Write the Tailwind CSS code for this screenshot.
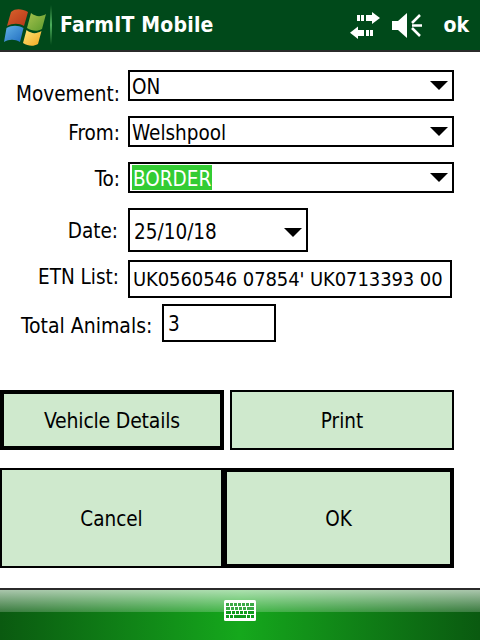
<!DOCTYPE html>
<html lang="en">
<head>
  <meta charset="UTF-8" />
  <title>FarmIT Mobile</title>
  <script src="https://cdn.jsdelivr.net/npm/@tailwindcss/browser@4"></script>
</head>
<body class="w-[480px] h-[640px] flex flex-col overflow-hidden bg-white text-black text-[20.5px] leading-none font-['DejaVu_Sans_Condensed','DejaVu_Sans',sans-serif]">

  <!-- Title bar -->
  <header class="h-[52px] shrink-0 flex items-center bg-[#00491a] border-b-2 border-[#2b2b2b] text-white">
    <svg class="ml-[4px] w-[43px] h-[44px] shrink-0" viewBox="0 0 43 44">
      <defs>
        <linearGradient id="red" x1="0" y1="0" x2="1" y2="1"><stop offset="0" stop-color="#d9622c"/><stop offset="1" stop-color="#b5371a"/></linearGradient>
        <linearGradient id="grn" x1="0" y1="0" x2="1" y2="1"><stop offset="0" stop-color="#a6c24e"/><stop offset="1" stop-color="#5c9a2c"/></linearGradient>
        <linearGradient id="blu" x1="0" y1="0" x2="1" y2="1"><stop offset="0" stop-color="#62b2e6"/><stop offset="1" stop-color="#1f6cc0"/></linearGradient>
        <linearGradient id="yel" x1="0" y1="0" x2="1" y2="1"><stop offset="0" stop-color="#fde57a"/><stop offset="1" stop-color="#f4a81f"/></linearGradient>
      </defs>
      <path d="M7 9 C12 5 18 6 24 9 L20 23 C15 20 9 20 3 23 Z" fill="url(#red)"/>
      <path d="M27 10 C32 14 37 14 42 11 L38 26 C33 29 28 28 23 25 Z" fill="url(#grn)"/>
      <path d="M2.500 25 C8 22 14 22 19.500 25 L16 39 C11 36 5 36 0 39 Z" fill="url(#blu)"/>
      <path d="M22.500 27 C28 31 32 31 37.500 28 L34 41 C29 44 24 43 19 40 Z" fill="url(#yel)"/>
    </svg>
    <div class="ml-[3px] w-[2px] h-[40px] bg-gradient-to-b from-[#00491a] via-[#4caf5c] to-[#00491a]"></div>
    <h1 class="ml-[8px] font-bold text-[21px] tracking-[0.2px]">FarmIT Mobile</h1>
    <div class="ml-auto flex items-center">
      <svg class="w-[30px] h-[27px]" viewBox="0 0 30 27" fill="#fff">
        <path d="M7 3h3v6H7zM11 3h3v6h-3zM16 3h6V0l8 6-8 6V9h-6z"/>
        <path d="M23 18h-3v6h3zM19 18h-3v6h3zM14 18H8v-3.500L0 20.750 8 27v-3h6z"/>
      </svg>
      <svg class="ml-[12px] w-[31px] h-[25px]" viewBox="0 0 31 25">
        <path d="M0 8h6L15 0v25L6 17H0z" fill="#fff"/>
        <path d="M20 12.500h10M20 10L28 2M20 15l8 8" stroke="#fff" stroke-width="2.500" fill="none"/>
      </svg>
      <span class="ml-[20px] mr-[11px] font-bold text-[21px]">ok</span>
    </div>
  </header>

  <!-- Form -->
  <main class="flex-1 flex flex-col">
    <div class="mt-[18px] flex items-center">
      <label class="w-[120px] text-right self-end -mb-[3px]">Movement:</label>
      <div class="ml-[8px] w-[326px] h-[31px] border-2 border-black flex items-center justify-between pl-[2px] pr-[4px]">
        <span class="pt-[4px]">ON</span>
        <span class="border-x-[9px] border-x-transparent border-t-[9px] border-t-black"></span>
      </div>
    </div>
    <div class="mt-[15px] flex items-center">
      <label class="w-[120px] text-right pt-[4px]">From:</label>
      <div class="ml-[8px] w-[326px] h-[31px] border-2 border-black flex items-center justify-between pl-[2px] pr-[4px]">
        <span class="pt-[4px]">Welshpool</span>
        <span class="border-x-[9px] border-x-transparent border-t-[9px] border-t-black"></span>
      </div>
    </div>
    <div class="mt-[15px] flex items-center">
      <label class="w-[120px] text-right pt-[4px]">To:</label>
      <div class="ml-[8px] w-[326px] h-[31px] border-2 border-black flex items-center justify-between pl-[2px] pr-[4px]">
        <span class="bg-[#33cc33] text-white h-[25px] flex items-center px-[1px] pt-[3px]">BORDER</span>
        <span class="border-x-[9px] border-x-transparent border-t-[9px] border-t-black"></span>
      </div>
    </div>
    <div class="mt-[15px] flex items-center">
      <label class="w-[118px] text-right pt-[2px]">Date:</label>
      <div class="ml-[10px] w-[180px] h-[44px] border-2 border-black flex items-center justify-between pl-[4px] pr-[4px]">
        <span class="pt-[4px]">25/10/18</span>
        <span class="border-x-[9px] border-x-transparent border-t-[9px] border-t-black mt-[5px]"></span>
      </div>
    </div>
    <div class="mt-[8px] flex items-center">
      <label class="w-[119px] text-right pb-[4px]">ETN List:</label>
      <div class="ml-[9px] w-[324px] h-[38px] border-2 border-black flex items-center pl-[3px] overflow-hidden whitespace-nowrap text-[20px] tracking-[-0.1px]">UK0560546 07854' UK0713393 00</div>
    </div>
    <div class="mt-[6px] flex items-center">
      <label class="ml-[21px] w-[133px] text-[21px] pt-[6px]">Total Animals:</label>
      <div class="ml-[8px] w-[114px] h-[38px] border-2 border-black flex items-center pl-[4px]"><span class="pt-[2px]">3</span></div>
    </div>

    <div class="mt-[48px] flex gap-[6px] w-[454px]">
      <button class="w-[224px] h-[60px] border-4 border-black bg-[#cfe9cd] text-[21px] tracking-[-0.2px] pt-[2px]">Vehicle Details</button>
      <button class="w-[224px] h-[60px] border-2 border-black bg-[#cfe9cd] pt-[2px]">Print</button>
    </div>
    <div class="mt-[18px] flex w-[454px]">
      <button class="w-[223px] h-[100px] border-2 border-black bg-[#cfe9cd] pt-[2px]">Cancel</button>
      <button class="w-[231px] h-[100px] border-4 border-black bg-[#cfe9cd] pt-[2px]">OK</button>
    </div>
  </main>

  <!-- Bottom bar -->
  <footer class="relative h-[52px] shrink-0 border-t-2 border-[#2b2b2b] bg-gradient-to-r from-[#0a5a10] via-[#15a81c] to-[#0a5a10] flex justify-center">
    <div class="absolute inset-x-0 top-0 h-[22px] bg-gradient-to-b from-white/65 to-white/20"></div>
    <svg class="relative mt-[10px] w-[32px] h-[21px]" viewBox="0 0 32 21">
      <rect width="32" height="21" rx="1.500" fill="#fff"/>
      <g fill="#3aa845">
        <path d="M2 3h3v3H2zM6 3h3v3H6zM10 3h3v3h-3zM14 3h3v3h-3zM18 3h3v3h-3zM22 3h3v3h-3zM26 3h4v3h-4z"/>
        <path d="M2 7h4v3H2zM7 7h3v3H7zM11 7h3v3h-3zM15 7h3v3h-3zM19 7h3v3h-3zM23 7h7v3h-7z"/>
      </g>
      <g fill="#0f9a1c">
        <path d="M2 11h5v3H2zM8 11h3v3H8zM12 11h3v3h-3zM16 11h3v3h-3zM20 11h3v3h-3zM24 11h6v3h-6z"/>
        <path d="M2 15h3v3H2zM6 15h3v3H6zM10 15h12v3H10zM23 15h3v3h-3zM27 15h3v3h-3z"/>
      </g>
    </svg>
  </footer>

</body>
</html>
